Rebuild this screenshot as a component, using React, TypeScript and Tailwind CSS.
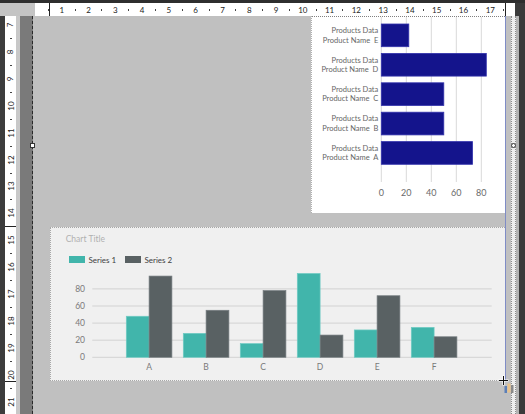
import React from 'react';

const chartFont = "font-['Lato','Liberation_Sans',sans-serif]";

// ruler slots: every half centimetre, numbers on whole ones
const hSlots = Array.from({ length: 35 }, (_, i) => (i + 1) / 2);
const vSlots = Array.from({ length: 30 }, (_, i) => 7 + i / 2);

const products = [
  { name: 'E', value: 22 },
  { name: 'D', value: 84 },
  { name: 'C', value: 50 },
  { name: 'B', value: 50 },
  { name: 'A', value: 73 },
];

const seriesData = [
  { cat: 'A', s1: 48, s2: 95 },
  { cat: 'B', s1: 28, s2: 55 },
  { cat: 'C', s1: 16, s2: 78 },
  { cat: 'D', s1: 98, s2: 26 },
  { cat: 'E', s1: 32, s2: 72 },
  { cat: 'F', s1: 35, s2: 24 },
];

function TopRuler() {
  return (
    <div className="relative flex h-[13px] w-[480px] overflow-hidden bg-white pl-[6.7px] font-['Lato','Liberation_Sans',sans-serif]">
      {hSlots.map((n) => (
        <div key={n} className="flex w-[13.4px] shrink-0 items-center justify-center">
          {Number.isInteger(n) ? (
            <span className="text-[8px] leading-none text-[#222]">{n}</span>
          ) : (
            <span className="block h-[2px] w-px bg-[#444]" />
          )}
        </div>
      ))}
      <div className="absolute left-[14px] top-0 h-full w-px bg-[#222]" />
      <div className="absolute left-[470px] top-0 h-full w-px bg-[#222]" />
    </div>
  );
}

function SideRuler() {
  return (
    <div className="relative flex w-[11px] flex-col overflow-hidden bg-white pt-[2.3px] font-['Lato','Liberation_Sans',sans-serif]">
      {vSlots.map((n) => (
        <div key={n} className="flex h-[13.465px] shrink-0 items-center justify-center">
          {Number.isInteger(n) ? (
            <span className="block -rotate-90 text-[8px] leading-none text-[#222]">{n}</span>
          ) : (
            <span className="block h-px w-[2px] bg-[#444]" />
          )}
        </div>
      ))}
      <div className="absolute left-0 top-[210px] h-px w-full bg-[#222]" />
      <div className="absolute left-0 top-[365px] h-px w-full bg-[#222]" />
    </div>
  );
}

function ProductChart() {
  const grid = [0, 20, 40, 60, 80];
  return (
    <div className="h-[197px] w-[194px] border-l border-t border-dotted border-l-[#b0b0b0] border-t-[#808080] bg-white">
      <svg width="193" height="196" className={chartFont}>
        {grid.map((g) => (
          <line key={g} x1={69.3 + g * 1.25} x2={69.3 + g * 1.25} y1={0} y2={165} stroke="#d9d9d9" strokeWidth="1" />
        ))}
        {products.map((p, i) => {
          const top = 7 + i * 29.4;
          const mid = top + 11.35;
          return (
            <g key={p.name}>
              <rect x={69.3} y={top} width={p.value * 1.25} height={22.7} fill="#14148c" stroke="#3232ac" strokeWidth="0.8" />
              <text x={66.3} y={mid - 4.6} textAnchor="end" dominantBaseline="central" fontSize="7.5" fill="#666666">
                Products Data
              </text>
              <text x={66.3} y={mid + 4.7} textAnchor="end" dominantBaseline="central" fontSize="7.5" fill="#666666" style={{ whiteSpace: 'pre' }}>
                {`Product Name  ${p.name}`}
              </text>
            </g>
          );
        })}
        {grid.map((g) => (
          <text key={g} x={69.3 + g * 1.25} y={175} textAnchor="middle" dominantBaseline="central" fontSize="9" fill="#6a6a6a">
            {g}
          </text>
        ))}
      </svg>
    </div>
  );
}

function SeriesChart() {
  const k = 0.855;
  const base = 93.3;
  return (
    <div className={`ml-[17px] flex h-[154px] w-[455px] flex-col border-b border-l border-t border-dotted border-[#a8a8a8] bg-[#f0f0f0] ${chartFont}`}>
      <div className="ml-[14.7px] mt-[6px] h-[10px] text-[8.5px] leading-[10px] text-[#b0b0b0]">Chart Title</div>
      <div className="ml-[18px] mt-[11px] flex h-[9px] items-center text-[8px] leading-none text-[#404040]">
        <div className="flex w-[56px] items-center gap-[3.5px]">
          <span className="block h-[7px] w-[16px] bg-[#41b5ab]" />
          <span>Series 1</span>
        </div>
        <div className="flex items-center gap-[3.5px]">
          <span className="block h-[7px] w-[16px] bg-[#596163]" />
          <span>Series 2</span>
        </div>
      </div>
      <svg width="454" height="116">
        {[0, 20, 40, 60, 80].map((g) => (
          <g key={g}>
            <line x1={41.3} x2={440.7} y1={base - g * k} y2={base - g * k} stroke="#d2d2d2" strokeWidth="1" />
            <text x={34} y={base - g * k} textAnchor="end" dominantBaseline="central" fontSize="8.5" fill="#7a7a7a">
              {g}
            </text>
          </g>
        ))}
        {seriesData.map((d, i) => {
          const x = 75.3 + i * 57;
          return (
            <g key={d.cat}>
              <rect x={x} y={base - d.s1 * k} width={22.8} height={d.s1 * k} fill="#41b5ab" stroke="#6fcbc3" strokeWidth="0.7" />
              <rect x={x + 22.8} y={base - d.s2 * k} width={22.8} height={d.s2 * k} fill="#596163" stroke="#767d80" strokeWidth="0.7" />
              <text x={x + 22.8} y={102.7} textAnchor="middle" dominantBaseline="central" fontSize="8.5" fill="#7a7a7a">
                {d.cat}
              </text>
            </g>
          );
        })}
      </svg>
    </div>
  );
}

export default function App() {
  return (
    <div className="relative flex h-[414px] w-[525px] flex-col overflow-hidden bg-[#c0c0c0]">
      <div className="h-[3px] shrink-0 bg-[#2e2e2e]" />
      <div className="flex h-[13px] shrink-0">
        <div className="w-[35px] bg-[#c4c4c4]" />
        <TopRuler />
        <div className="flex-1 bg-[#3a3a3a]" />
      </div>
      <div className="flex min-h-0 flex-1">
        <div className="w-[5px] bg-[#3c3c3c]" />
        <SideRuler />
        <div className="w-[4px] bg-[#c8c8c8]" />
        <div className="w-[13px] border-r border-dashed border-[#2a2a2a] bg-[#7a7a7a]" />
        <div className="flex w-[473px] flex-col">
          <div className="flex flex-col gap-[14px] border-r border-[#7f8cc6]">
            <div className="flex justify-end">
              <ProductChart />
            </div>
            <SeriesChart />
          </div>
        </div>
        <div className="w-[5px] bg-[#c0c0c0]" />
        <div className="w-[5px] border-x border-dotted border-[#8a8a8a] bg-[#eeeeee]" />
        <div className="w-[3px] bg-[#b4b4b4]" />
        <div className="flex-1 bg-[#3a3a3a]" />
      </div>

      {/* resize handles */}
      <div className="absolute left-[30px] top-[143px] h-[5px] w-[5px] border border-[#333] bg-white" />
      <div className="absolute left-[511px] top-[143px] h-[5px] w-[5px] rounded-full border border-[#333] bg-white" />

      {/* mouse cursor */}
      <svg className="absolute left-[498px] top-[375px]" width="11" height="11" viewBox="0 0 11 11">
        <path d="M5.5 0.5v10M0.5 5.5h10" stroke="#fff" strokeWidth="2.2" />
        <path d="M5.5 1v9M1 5.5h9" stroke="#111" strokeWidth="1" />
      </svg>
      <svg className="absolute left-[504px] top-[383px]" width="10" height="11" viewBox="0 0 10 11">
        <rect x="0.5" y="3" width="2.5" height="7" fill="#5b7fb8" />
        <rect x="3.5" y="0.5" width="3" height="9" fill="#e9c28a" />
        <rect x="7" y="2" width="2.5" height="8" fill="#8a8a8a" />
      </svg>
    </div>
  );
}
